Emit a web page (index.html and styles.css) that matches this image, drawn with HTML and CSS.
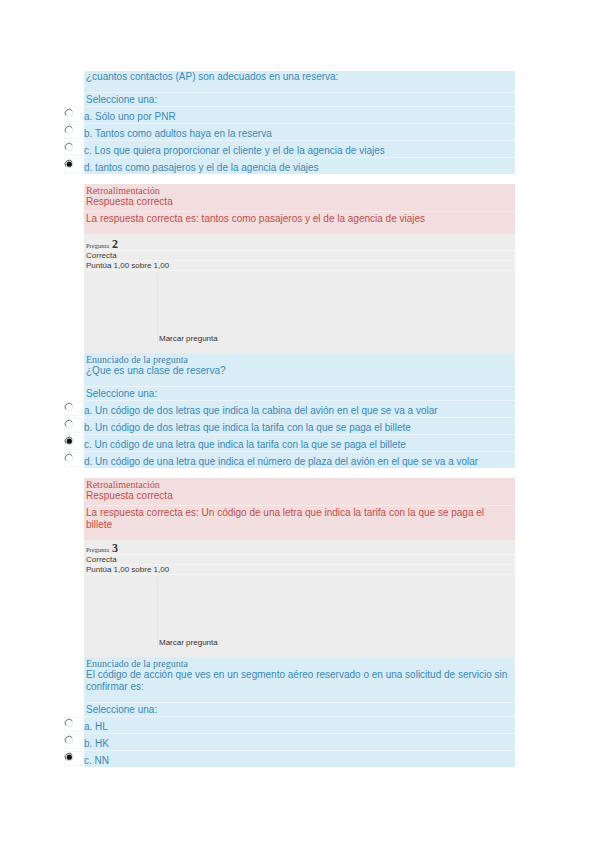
FILE: index.html
```html
<!DOCTYPE html>
<html lang="es">
<head>
<meta charset="utf-8">
<title>Cuestionario</title>
<link rel="stylesheet" href="styles.css">
</head>
<body>
<div class="page">

  <section class="box blue">
    <div class="head"><div class="line">¿cuantos contactos (AP) son adecuados en una reserva:</div></div>
    <div class="sel">Seleccione una:</div>
    <div class="opt"><span class="radio"><svg viewBox="0 0 10 10" width="10" height="10"><circle cx="5" cy="5" r="3.8" fill="#fff" stroke="#e2e2e2" stroke-width="0.8"/><path d="M2 7.4 A3.8 3.8 0 0 1 8.2 2.8" fill="none" stroke="#6a6a6a" stroke-width="0.9"/></svg></span><span class="txt">a. Sólo uno por PNR</span></div>
    <div class="opt"><span class="radio"><svg viewBox="0 0 10 10" width="10" height="10"><circle cx="5" cy="5" r="3.8" fill="#fff" stroke="#e2e2e2" stroke-width="0.8"/><path d="M2 7.4 A3.8 3.8 0 0 1 8.2 2.8" fill="none" stroke="#6a6a6a" stroke-width="0.9"/></svg></span><span class="txt">b. Tantos como adultos haya en la reserva</span></div>
    <div class="opt"><span class="radio"><svg viewBox="0 0 10 10" width="10" height="10"><circle cx="5" cy="5" r="3.8" fill="#fff" stroke="#e2e2e2" stroke-width="0.8"/><path d="M2 7.4 A3.8 3.8 0 0 1 8.2 2.8" fill="none" stroke="#6a6a6a" stroke-width="0.9"/></svg></span><span class="txt">c. Los que quiera proporcionar el cliente y el de la agencia de viajes</span></div>
    <div class="opt"><span class="radio"><svg viewBox="0 0 10 10" width="10" height="10"><circle cx="5" cy="5" r="3.8" fill="#fff" stroke="#c8c8c8" stroke-width="0.8"/><circle cx="5.3" cy="5.2" r="2.6" fill="#111"/><path d="M2 7.4 A3.8 3.8 0 0 1 8.2 2.8" fill="none" stroke="#555" stroke-width="0.9"/></svg></span><span class="txt">d. tantos como pasajeros y el de la agencia de viajes</span></div>
  </section>

  <section class="box pink">
    <div class="fhead">
      <div class="serif">Retroalimentación</div>
      <div class="line">Respuesta correcta</div>
    </div>
    <div class="answer">La respuesta correcta es: tantos como pasajeros y el de la agencia de viajes</div>
  </section>

  <section class="box gray info-a">
    <div class="qno"><span class="qlabel">Pregunta</span> <span class="qnum">2</span></div>
    <div class="meta">Correcta</div>
    <div class="meta">Puntúa 1,00 sobre 1,00</div>
    <div class="flag">Marcar pregunta</div>
  </section>

  <section class="box blue">
    <div class="head">
      <div class="serif">Enunciado de la pregunta</div>
      <div class="line">¿Que es una clase de reserva?</div>
    </div>
    <div class="sel">Seleccione una:</div>
    <div class="opt"><span class="radio"><svg viewBox="0 0 10 10" width="10" height="10"><circle cx="5" cy="5" r="3.8" fill="#fff" stroke="#e2e2e2" stroke-width="0.8"/><path d="M2 7.4 A3.8 3.8 0 0 1 8.2 2.8" fill="none" stroke="#6a6a6a" stroke-width="0.9"/></svg></span><span class="txt">a. Un código de dos letras que indica la cabina del avión en el que se va a volar</span></div>
    <div class="opt"><span class="radio"><svg viewBox="0 0 10 10" width="10" height="10"><circle cx="5" cy="5" r="3.8" fill="#fff" stroke="#e2e2e2" stroke-width="0.8"/><path d="M2 7.4 A3.8 3.8 0 0 1 8.2 2.8" fill="none" stroke="#6a6a6a" stroke-width="0.9"/></svg></span><span class="txt">b. Un código de dos letras que indica la tarifa con la que se paga el billete</span></div>
    <div class="opt"><span class="radio"><svg viewBox="0 0 10 10" width="10" height="10"><circle cx="5" cy="5" r="3.8" fill="#fff" stroke="#c8c8c8" stroke-width="0.8"/><circle cx="5.3" cy="5.2" r="2.6" fill="#111"/><path d="M2 7.4 A3.8 3.8 0 0 1 8.2 2.8" fill="none" stroke="#555" stroke-width="0.9"/></svg></span><span class="txt">c. Un código de una letra que indica la tarifa con la que se paga el billete</span></div>
    <div class="opt"><span class="radio"><svg viewBox="0 0 10 10" width="10" height="10"><circle cx="5" cy="5" r="3.8" fill="#fff" stroke="#e2e2e2" stroke-width="0.8"/><path d="M2 7.4 A3.8 3.8 0 0 1 8.2 2.8" fill="none" stroke="#6a6a6a" stroke-width="0.9"/></svg></span><span class="txt">d. Un código de una letra que indica el número de plaza del avión en el que se va a volar</span></div>
  </section>

  <section class="box pink">
    <div class="fhead">
      <div class="serif">Retroalimentación</div>
      <div class="line">Respuesta correcta</div>
    </div>
    <div class="answer">La respuesta correcta es: Un código de una letra que indica la tarifa con la que se paga el billete</div>
  </section>

  <section class="box gray info-b">
    <div class="qno"><span class="qlabel">Pregunta</span> <span class="qnum">3</span></div>
    <div class="meta">Correcta</div>
    <div class="meta">Puntúa 1,00 sobre 1,00</div>
    <div class="flag">Marcar pregunta</div>
  </section>

  <section class="box blue">
    <div class="head">
      <div class="serif">Enunciado de la pregunta</div>
      <div class="line">El código de acción que ves en un segmento aéreo reservado o en una solicitud de servicio sin confirmar es:</div>
    </div>
    <div class="sel">Seleccione una:</div>
    <div class="opt"><span class="radio"><svg viewBox="0 0 10 10" width="10" height="10"><circle cx="5" cy="5" r="3.8" fill="#fff" stroke="#e2e2e2" stroke-width="0.8"/><path d="M2 7.4 A3.8 3.8 0 0 1 8.2 2.8" fill="none" stroke="#6a6a6a" stroke-width="0.9"/></svg></span><span class="txt">a. HL</span></div>
    <div class="opt"><span class="radio"><svg viewBox="0 0 10 10" width="10" height="10"><circle cx="5" cy="5" r="3.8" fill="#fff" stroke="#e2e2e2" stroke-width="0.8"/><path d="M2 7.4 A3.8 3.8 0 0 1 8.2 2.8" fill="none" stroke="#6a6a6a" stroke-width="0.9"/></svg></span><span class="txt">b. HK</span></div>
    <div class="opt"><span class="radio"><svg viewBox="0 0 10 10" width="10" height="10"><circle cx="5" cy="5" r="3.8" fill="#fff" stroke="#c8c8c8" stroke-width="0.8"/><circle cx="5.3" cy="5.2" r="2.6" fill="#111"/><path d="M2 7.4 A3.8 3.8 0 0 1 8.2 2.8" fill="none" stroke="#555" stroke-width="0.9"/></svg></span><span class="txt">c. NN</span></div>
  </section>

</div>
</body>
</html>
```

FILE: styles.css
```css
html, body {
  margin: 0;
  padding: 0;
  background: #ffffff;
}

.page {
  margin-left: 84px;
  width: 431px;
  padding-top: 71px;
  font-family: "Liberation Sans", Arial, sans-serif;
  font-size: 10px;
}

.box {
  display: block;
}

.blue {
  background: #d9edf7;
  color: #3a89b4;
}

.pink {
  background: #f2dede;
  color: #bd4f4c;
  margin-top: 10px;
}

.gray {
  background: #ededed;
  color: #333333;
}

.serif {
  font-family: "Liberation Serif", "Times New Roman", serif;
  font-size: 10px;
  line-height: 11px;
  padding-top: 1px;
}

.blue .serif {
  color: #3b82a8;
}

.line {
  line-height: 12px;
}

.head {
  padding: 0 4px 9px 2px;
}

.sel {
  line-height: 12px;
  padding: 2px 0 0 2px;
  box-shadow: inset 0 1px 0 rgba(255, 255, 255, 0.45);
}

.opt {
  display: flex;
  align-items: flex-start;
  height: 17px;
  box-shadow: inset 0 1px 0 rgba(255, 255, 255, 0.45);
}

.radio {
  flex: none;
  width: 19px;
  height: 15px;
  margin-left: -20px;
  margin-right: 1px;
  margin-top: 1px;
  background: #ffffff;
  box-shadow: inset 0 0 0 1px #f1f6f9;
  display: flex;
  align-items: flex-start;
  justify-content: flex-start;
}

.radio svg {
  display: block;
  margin-top: 1px;
  margin-left: 0;
}

.txt {
  line-height: 12px;
  padding-top: 5px;
  white-space: nowrap;
}

.fhead {
  padding: 0 4px 4px 2px;
}

.fhead .line {
  line-height: 11px;
}

.answer {
  line-height: 12px;
  padding: 2px 30px 9px 2px;
  box-shadow: inset 0 1px 0 rgba(255, 255, 255, 0.4);
}

.info-a {
  padding: 3px 0 9px 2px;
}

.info-b {
  padding: 1px 0 9px 2px;
}

.qno {
  line-height: 14px;
  height: 14px;
  box-shadow: inset 0 -1px 0 rgba(255, 255, 255, 0.5);
}

.qlabel {
  font-family: "Liberation Serif", "Times New Roman", serif;
  font-size: 6.5px;
  color: #444;
}

.qnum {
  font-family: "Liberation Serif", "Times New Roman", serif;
  font-size: 12px;
  font-weight: bold;
  color: #333;
}

.meta {
  font-size: 8px;
  line-height: 10px;
  color: #3a3a3a;
  box-shadow: inset 0 -1px 0 rgba(255, 255, 255, 0.4);
}

.flag {
  margin-left: 71px;
  margin-top: 3px;
  padding-top: 60px;
  padding-left: 1px;
  border-left: 1px solid #e6e6e6;
  font-size: 8px;
  line-height: 10px;
  color: #333;
}
```
